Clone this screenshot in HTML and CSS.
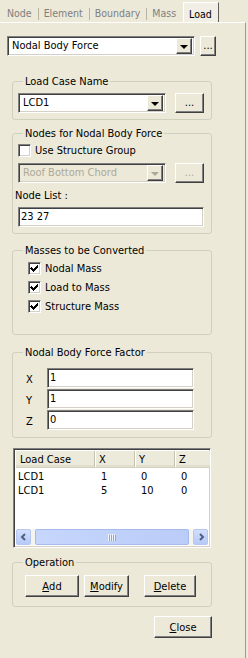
FILE: index.html
```html
<!DOCTYPE html>
<html>
<head>
<meta charset="utf-8">
<link rel="stylesheet" href="styles.css">
</head>
<body>
<div class="window">
  <div class="tabs">
    <span class="tab">Node</span><span class="sep"></span>
    <span class="tab">Element</span><span class="sep"></span>
    <span class="tab">Boundary</span><span class="sep"></span>
    <span class="tab">Mass</span>
    <span class="tab active">Load</span>
  </div>
  <div class="page">
    <div class="row top-row">
      <div class="combo main-combo"><span class="combo-text">Nodal Body Force</span><span class="drop"><i class="tri"></i></span></div>
      <button class="btn dots small">...</button>
    </div>

    <fieldset class="group lcn">
      <legend>Load Case Name</legend>
      <div class="row">
        <div class="combo lc-combo"><span class="combo-text">LCD1</span><span class="drop"><i class="tri"></i></span></div>
        <button class="btn dots wide">...</button>
      </div>
    </fieldset>

    <fieldset class="group nodes">
      <legend>Nodes for Nodal Body Force</legend>
      <label class="check-row first"><span class="cb"></span><span>Use Structure Group</span></label>
      <div class="row sg-row">
        <div class="combo lc-combo disabled"><span class="combo-text">Roof Bottom Chord</span><span class="drop"><i class="tri"></i></span></div>
        <button class="btn dots wide disabled">...</button>
      </div>
      <div class="field-label">Node List :</div>
      <div class="edit node-list">23 27</div>
    </fieldset>

    <fieldset class="group masses">
      <legend>Masses to be Converted</legend>
      <label class="check-row"><span class="cb checked"><svg width="13" height="13" viewBox="0 0 13 13"><path d="M3 5h1v1h1v1h1v-1h1v-1h1v-1h1v-1h1v3h-1v1h-1v1h-1v1h-1v1h-1v-1h-1v-1h-1v-1h-1z" fill="#000" shape-rendering="crispEdges"/></svg></span><span>Nodal Mass</span></label>
      <label class="check-row"><span class="cb checked"><svg width="13" height="13" viewBox="0 0 13 13"><path d="M3 5h1v1h1v1h1v-1h1v-1h1v-1h1v-1h1v3h-1v1h-1v1h-1v1h-1v1h-1v-1h-1v-1h-1v-1h-1z" fill="#000" shape-rendering="crispEdges"/></svg></span><span>Load to Mass</span></label>
      <label class="check-row"><span class="cb checked"><svg width="13" height="13" viewBox="0 0 13 13"><path d="M3 5h1v1h1v1h1v-1h1v-1h1v-1h1v-1h1v3h-1v1h-1v1h-1v1h-1v1h-1v-1h-1v-1h-1v-1h-1z" fill="#000" shape-rendering="crispEdges"/></svg></span><span>Structure Mass</span></label>
    </fieldset>

    <fieldset class="group factor">
      <legend>Nodal Body Force Factor</legend>
      <div class="factor-row"><span class="axis">X</span><div class="edit factor-edit">1</div></div>
      <div class="factor-row"><span class="axis">Y</span><div class="edit factor-edit">1</div></div>
      <div class="factor-row"><span class="axis">Z</span><div class="edit factor-edit">0</div></div>
    </fieldset>

    <div class="list">
      <div class="list-head">
        <span class="hcell c1">Load Case</span>
        <span class="hcell c2">X</span>
        <span class="hcell c3">Y</span>
        <span class="hcell c4">Z</span>
      </div>
      <div class="list-body">
        <div class="lrow"><span class="c1">LCD1</span><span class="c2">1</span><span class="c3">0</span><span class="c4">0</span></div>
        <div class="lrow"><span class="c1">LCD1</span><span class="c2">5</span><span class="c3">10</span><span class="c4">0</span></div>
      </div>
      <div class="hscroll">
        <span class="sbtn"><svg width="8" height="8" viewBox="0 0 8 8"><path d="M5 1L2 4L5 7" fill="none" stroke="#4d6185" stroke-width="2"/></svg></span>
        <span class="thumb"><svg width="8" height="7" viewBox="0 0 8 7"><path d="M0.5 0v7M2.5 0v7M4.5 0v7M6.5 0v7" stroke="#eef2fd" stroke-width="1"/><path d="M1.5 1v7M3.5 1v7M5.5 1v7M7.5 1v7" stroke="#8ca6e0" stroke-width="1"/></svg></span>
        <span class="sbtn"><svg width="8" height="8" viewBox="0 0 8 8"><path d="M3 1L6 4L3 7" fill="none" stroke="#4d6185" stroke-width="2"/></svg></span>
      </div>
    </div>

    <fieldset class="group operation">
      <legend>Operation</legend>
      <div class="row ops">
        <button class="btn op add"><u>A</u>dd</button>
        <button class="btn op modify"><u>M</u>odify</button>
        <button class="btn op delete"><u>D</u>elete</button>
      </div>
    </fieldset>

    <button class="btn close"><u>C</u>lose</button>
  </div>
</div>
</body>
</html>
```

FILE: styles.css
```css
* { box-sizing: border-box; }
html, body { margin: 0; padding: 0; }
body {
  width: 248px;
  height: 658px;
  overflow: hidden;
  background: #ECE9D8;
  font-family: "DejaVu Sans Condensed", "DejaVu Sans", sans-serif;
  font-stretch: condensed;
  font-size: 11px;
  color: #000;
}
.window { width: 248px; height: 658px; }

/* tabs */
.tabs {
  display: flex;
  height: 22px;
  padding-left: 7px;
  align-items: stretch;
  font-size: 10.5px;
}
.tab {
  color: #7f7f7f;
  display: flex;
  align-items: center;
  padding-top: 4px;
  white-space: nowrap;
}
.sep {
  width: 1px;
  background: #b7b4a5;
  margin: 8px 5px 2px 6px;
}
.tab.active {
  color: #000;
  margin-left: 7px;
  padding: 3px 6px 0 5px;
  border-top: 1px solid #fff;
  border-left: 1px solid #fff;
  border-right: 1px solid #5f5d55;
  background: #F1EFE5;
  margin-top: 2px;
}

/* page */
.page {
  height: 640px;
  border-top: 1px solid #fff;
  border-right: 1px solid #9d9b90;
  width: 246px;
  padding: 13px 0 0 7px;
  display: flex;
  flex-direction: column;
  align-items: flex-start;
}
.row { display: flex; align-items: center; }

/* combo */
.combo {
  display: flex;
  align-items: center;
  height: 20px;
  background: #fff;
  border: 1px solid;
  border-color: #808080 #fff #fff #808080;
  box-shadow: inset 1px 1px 0 #404040, inset -1px -1px 0 #D4D0C8;
  padding: 2px;
}
.combo-text { flex: 1; padding-left: 2px; line-height: 14px; white-space: nowrap; overflow: hidden; }
.drop {
  width: 16px;
  height: 16px;
  background: #ECE9D8;
  border: 1px solid;
  border-color: #fff #404040 #404040 #fff;
  box-shadow: inset -1px -1px 0 #808080;
  display: flex;
  align-items: center;
  justify-content: center;
}
.tri {
  width: 0; height: 0;
  border-left: 4px solid transparent;
  border-right: 4px solid transparent;
  border-top: 4px solid #000;
  margin-top: 1px;
  margin-left: -1px;
}
.combo.disabled { background: #ECE9D8; color: #ACA899; }
.combo.disabled .tri { border-top-color: #ACA899; }

.main-combo { width: 188px; }
.lc-combo { width: 148px; }

/* buttons */
.btn {
  font: inherit;
  color: #000;
  background: #ECE9D8;
  border: 1px solid;
  border-color: #fff #404040 #404040 #fff;
  box-shadow: inset -1px -1px 0 #808080;
  padding: 0;
  margin: 0;
  display: flex;
  align-items: center;
  justify-content: center;
}
.btn.disabled { color: #ACA899; }
.dots { height: 20px; line-height: 10px; padding-bottom: 1px; }
.dots.small { width: 16px; margin-left: 5px; }
.dots.wide { width: 29px; margin-left: 9px; }

/* group boxes */
.group {
  width: 200px;
  margin: 0 0 0 5px;
  border: 1px solid #D0D0BF;
  border-radius: 3px;
  padding: 0 7px 6px 5px;
  min-width: 0;
}
.group legend {
  padding: 0 2px;
  margin-left: 5px;
  line-height: 13px;
  height: 13px;
}
.lcn { margin-top: 19px; padding-top: 5px; }
.nodes { margin-top: 7px; padding-top: 4px; }
.masses { margin-top: 10px; padding-top: 2px; padding-bottom: 18px; }
.factor { margin-top: 11px; padding-top: 9px; padding-bottom: 7px; }
.operation { margin-top: 8px; padding-top: 6px; padding-bottom: 9px; }

/* checkboxes */
.check-row {
  display: flex;
  align-items: center;
  height: 19px;
  padding-left: 10px;
}
.check-row.first { height: 13px; padding-left: 0; }
.cb {
  width: 13px;
  height: 13px;
  background: #fff;
  border: 1px solid;
  border-color: #808080 #fff #fff #808080;
  box-shadow: inset 1px 1px 0 #404040, inset -1px -1px 0 #D4D0C8;
  margin-right: 4px;
  flex: none;
}
.cb svg { display: block; margin: -1px; }

.sg-row { margin-top: 6px; }
.field-label { margin: 6px 0 0 -3px; line-height: 13px; }
.edit {
  background: #fff;
  border: 1px solid;
  border-color: #808080 #fff #fff #808080;
  box-shadow: inset 1px 1px 0 #404040, inset -1px -1px 0 #D4D0C8;
  height: 20px;
  line-height: 16px;
  padding: 1px 2px;
  white-space: nowrap;
}
.node-list { width: 186px; margin-top: 5px; }

.factor-row { display: flex; align-items: center; margin-bottom: 1px; }
.factor-row:last-child { margin-bottom: 0; }
.axis { width: 29px; padding-left: 8px; padding-top: 3px; }
.factor-edit { width: 147px; }

/* list view */
.list {
  margin: 10px 0 0 6px;
  width: 198px;
  height: 100px;
  background: #fff;
  border: 1px solid;
  border-color: #808080 #fff #fff #808080;
  box-shadow: inset 1px 1px 0 #404040, inset -1px -1px 0 #D4D0C8;
  padding: 2px;
  display: flex;
  flex-direction: column;
  overflow: hidden;
}
.list-head {
  display: grid;
  grid-template-columns: 79px 40px 40px 40px;
  height: 17px;
  background: #EBEADB;
  border-bottom: 1px solid #D6D2C2;
  box-shadow: inset 0 -2px 0 #E2DECD;
  flex: none;
  width: 194px;
  overflow: hidden;
}
.hcell {
  display: flex;
  align-items: center;
  padding-left: 4px;
  border-right: 1px solid #C7C5B2;
  box-shadow: 1px 0 0 #fff;
}
.list-body { flex: 1; padding-top: 2px; }
.lrow {
  display: grid;
  grid-template-columns: 79px 40px 40px 40px;
  height: 14px;
  line-height: 14px;
}
.lrow span { padding-left: 6px; }
.lrow .c1 { padding-left: 2px; }

.hscroll {
  flex: none;
  height: 16px;
  display: flex;
  background: #F5F4EF;
  gap: 2px;
}
.sbtn {
  width: 15px;
  height: 16px;
  background: linear-gradient(#D2DEFC, #B6CAF7);
  border: 1px solid #B6C8F1;
  border-radius: 2px;
  display: flex;
  align-items: center;
  justify-content: center;
  flex: none;
}
.thumb {
  flex: 1;
  height: 16px;
  background: linear-gradient(90deg, #C6D6FC, #BACCF8);
  border: 1px solid #A5B9EA;
  border-radius: 2px;
  display: flex;
  align-items: center;
  justify-content: center;
  margin: 0 2px;
}

/* operation */
.ops { padding-left: 7px; }
.op { height: 22px; }
.add { width: 54px; }
.modify { width: 45px; margin-left: 5px; }
.delete { width: 52px; margin-left: 15px; }
.close { width: 58px; height: 22px; margin: 9px 0 0 147px; }
```
